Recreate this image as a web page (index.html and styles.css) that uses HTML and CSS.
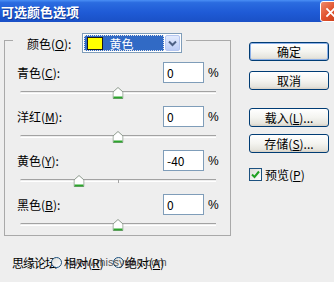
FILE: index.html
```html
<!DOCTYPE html>
<html>
<head>
    <title>可选颜色选项</title>
    <link rel="stylesheet" href="styles.css">
</head>
<body>
    <div class="window">
        <div class="titlebar">
            <span class="title">可选颜色选项</span>
            <span class="close">
                <svg width="21" height="21" viewBox="0 0 21 21"><path d="M6 6L15 15M15 6L6 15" stroke="#fff" stroke-width="2"/></svg>
            </span>
        </div>
        <div class="body">
            <div class="main">
                <fieldset class="group">
                    <legend class="legend">
                        <span class="color-label">颜色(<u>O</u>):</span>
                        <span class="select">
                            <span class="select-value"><span class="swatch"></span>黄色</span>
                            <span class="select-arrow">
                                <svg width="9" height="7" viewBox="0 0 9 7"><path d="M1 1.5L4.5 5L8 1.5" fill="none" stroke="#4d6185" stroke-width="2"/></svg>
                            </span>
                        </span>
                    </legend>

                    <div class="channel">
                        <div class="channel-head">
                            <span class="channel-name">青色(<u>C</u>):</span>
                            <span class="field">0</span>
                            <span class="unit">%</span>
                        </div>
                        <div class="slider">
                            <span class="tick"></span>
                            <span class="thumb" style="left: 50%"><svg width="11" height="12" viewBox="0 0 11 12"><path d="M0.5 11.5V5L5.5 0.5L10.5 5V11.5Z" fill="#fff" stroke="#8c9a8c"/><path d="M1 10.5H10" stroke="#2ca52c" stroke-width="2"/></svg></span>
                        </div>
                    </div>

                    <div class="channel">
                        <div class="channel-head">
                            <span class="channel-name">洋红(<u>M</u>):</span>
                            <span class="field">0</span>
                            <span class="unit">%</span>
                        </div>
                        <div class="slider">
                            <span class="tick"></span>
                            <span class="thumb" style="left: 50%"><svg width="11" height="12" viewBox="0 0 11 12"><path d="M0.5 11.5V5L5.5 0.5L10.5 5V11.5Z" fill="#fff" stroke="#8c9a8c"/><path d="M1 10.5H10" stroke="#2ca52c" stroke-width="2"/></svg></span>
                        </div>
                    </div>

                    <div class="channel">
                        <div class="channel-head">
                            <span class="channel-name">黄色(<u>Y</u>):</span>
                            <span class="field">-40</span>
                            <span class="unit">%</span>
                        </div>
                        <div class="slider">
                            <span class="tick"></span>
                            <span class="thumb" style="left: 30%"><svg width="11" height="12" viewBox="0 0 11 12"><path d="M0.5 11.5V5L5.5 0.5L10.5 5V11.5Z" fill="#fff" stroke="#8c9a8c"/><path d="M1 10.5H10" stroke="#2ca52c" stroke-width="2"/></svg></span>
                        </div>
                    </div>

                    <div class="channel">
                        <div class="channel-head">
                            <span class="channel-name">黑色(<u>B</u>):</span>
                            <span class="field">0</span>
                            <span class="unit">%</span>
                        </div>
                        <div class="slider">
                            <span class="tick"></span>
                            <span class="thumb" style="left: 50%"><svg width="11" height="12" viewBox="0 0 11 12"><path d="M0.5 11.5V5L5.5 0.5L10.5 5V11.5Z" fill="#fff" stroke="#8c9a8c"/><path d="M1 10.5H10" stroke="#2ca52c" stroke-width="2"/></svg></span>
                        </div>
                    </div>
                </fieldset>

                <div class="method">
                    <span class="site">思缘论坛</span>
                    <span class="radio"></span>
                    <span class="radio-label">相对(<u>R</u>)</span>
                    <span class="radio radio-second"></span>
                    <span class="radio-label">绝对(<u>A</u>)</span>
                    <span class="watermark">www.missyuan.com</span>
                </div>
            </div>

            <div class="side">
                <span class="btn btn-default">确定</span>
                <span class="btn btn-cancel">取消</span>
                <span class="btn btn-load">载入(<u>L</u>)...</span>
                <span class="btn btn-save">存储(<u>S</u>)...</span>
                <span class="check">
                    <span class="check-box">
                        <svg width="11" height="11" viewBox="0 0 11 11"><path d="M2 5.5L4.5 8L9 2.5" fill="none" stroke="#21a121" stroke-width="2"/></svg>
                    </span>
                    <span class="check-label">预览(<u>P</u>)</span>
                </span>
            </div>
        </div>
    </div>
</body>
</html>
```

FILE: styles.css
```css
body {
    margin: 0;
    background: #eeeeee;
    font-family: "Noto Sans CJK SC", "Liberation Sans", sans-serif;
    font-size: 12px;
    color: #000;
}
.window {
    width: 334px;
    height: 282px;
    overflow: hidden;
}
.titlebar {
    height: 22px;
    display: flex;
    align-items: center;
    justify-content: space-between;
    background: linear-gradient(to bottom, #4a8ff5 0%, #2b6ce0 12%, #1f5bd6 55%, #1a50c6 100%);
    overflow: hidden;
}
.title {
    color: #fff;
    font-weight: bold;
    font-size: 13px;
    padding-left: 1px;
    text-shadow: 1px 1px 0 #0f3a9a;
}
.close {
    width: 21px;
    height: 21px;
    margin-right: -7px;
    box-sizing: border-box;
    border: 1px solid #fff;
    border-radius: 3px;
    background: linear-gradient(135deg, #f08a6a, #e0512c 50%, #c83c16);
    display: flex;
}
.body {
    display: flex;
    padding-left: 4px;
}
.main {
    width: 227px;
}
.group {
    box-sizing: border-box;
    width: 227px;
    min-width: 0;
    margin: 5px 0 0;
    padding: 9px 14px 0 12px;
    border: 1px solid #a9a9a9;
}
.legend {
    display: flex;
    align-items: center;
    margin-left: -4px;
    padding: 6px 4px 0 14px;
}
.color-label {
    margin-right: 11px;
}
.select {
    display: flex;
    width: 100px;
    height: 20px;
    box-sizing: border-box;
    border: 1px solid #7f9db9;
    background: #fff;
    padding: 1px;
}
.select-value {
    flex: 1;
    display: flex;
    align-items: center;
    padding-left: 3px;
    background: #316ac5;
    color: #fff;
    outline: 1px dotted #e8e8e8;
    outline-offset: -1px;
}
.swatch {
    width: 14px;
    height: 11px;
    background: #ffff00;
    border: 1px solid #1a1a1a;
    margin-right: 6px;
}
.select-arrow {
    width: 15px;
    margin-left: 1px;
    box-sizing: border-box;
    border: 1px solid #b5c6f0;
    border-radius: 2px;
    background: linear-gradient(#e3ebfd, #bccdf7);
    display: flex;
    align-items: center;
    justify-content: center;
}
.channel-head {
    display: flex;
    align-items: center;
    height: 21px;
}
.channel-name {
    flex: 0 0 146px;
}
.field {
    flex: 0 0 41px;
    height: 21px;
    box-sizing: border-box;
    border: 1px solid #7f9db9;
    background: #fff;
    padding-left: 3px;
    line-height: 19px;
}
.unit {
    margin-left: 4px;
    font-family: "Liberation Sans", sans-serif;
}
.slider {
    position: relative;
    height: 12px;
    margin: 4px 0 7px 3px;
}
.slider::before {
    content: "";
    position: absolute;
    left: 0;
    right: 0;
    top: 4px;
    height: 1px;
    border-top: 1px solid #a2a2a2;
    border-bottom: 1px solid #fff;
    border-radius: 2px 0 0 2px;
}
.channel:last-child .slider {
    margin-bottom: 4px;
}
.tick {
    position: absolute;
    left: 50%;
    top: 5px;
    width: 1px;
    height: 3px;
    background: #a2a2a2;
}
.thumb {
    position: absolute;
    top: 0;
    width: 11px;
    height: 12px;
    transform: translateX(-50%);
    display: flex;
}
.method {
    position: relative;
    display: flex;
    align-items: center;
    height: 16px;
    margin-top: 18px;
    padding-left: 8px;
}
.site {
    letter-spacing: -1px;
}
.radio {
    width: 11px;
    height: 11px;
    box-sizing: border-box;
    border: 1px solid #1c5180;
    border-radius: 50%;
    background: linear-gradient(135deg, #dcdcd7, #fff);
    margin-left: -5px;
    margin-right: 2px;
}
.radio-second {
    margin-left: 9px;
    margin-right: 1px;
}
.watermark {
    position: absolute;
    left: 66px;
    top: 2px;
    font-family: "Liberation Sans", sans-serif;
    font-size: 11px;
    color: #222;
    opacity: 0.75;
}
.side {
    display: flex;
    flex-direction: column;
    margin-left: 18px;
    padding-top: 20px;
    width: 80px;
}
.btn {
    height: 19px;
    width: 80px;
    box-sizing: border-box;
    border: 1px solid #003c74;
    border-radius: 3px;
    background: linear-gradient(#ffffff, #f4f4f0 50%, #e6e5de 85%, #d6d0c5);
    display: flex;
    align-items: center;
    justify-content: center;
}
.btn-default {
    box-shadow: inset 0 0 0 1px #8cb0e8;
    margin-bottom: 10px;
}
.btn-cancel {
    margin-bottom: 18px;
}
.btn-load {
    margin-bottom: 7px;
}
.btn-save {
    margin-bottom: 15px;
}
.check {
    display: flex;
    align-items: center;
    height: 13px;
}
.check-box {
    width: 13px;
    height: 13px;
    box-sizing: border-box;
    border: 1px solid #1c5180;
    background: linear-gradient(135deg, #dcdcd7, #fff);
    display: flex;
}
.check-label {
    margin-left: 3px;
}
```
